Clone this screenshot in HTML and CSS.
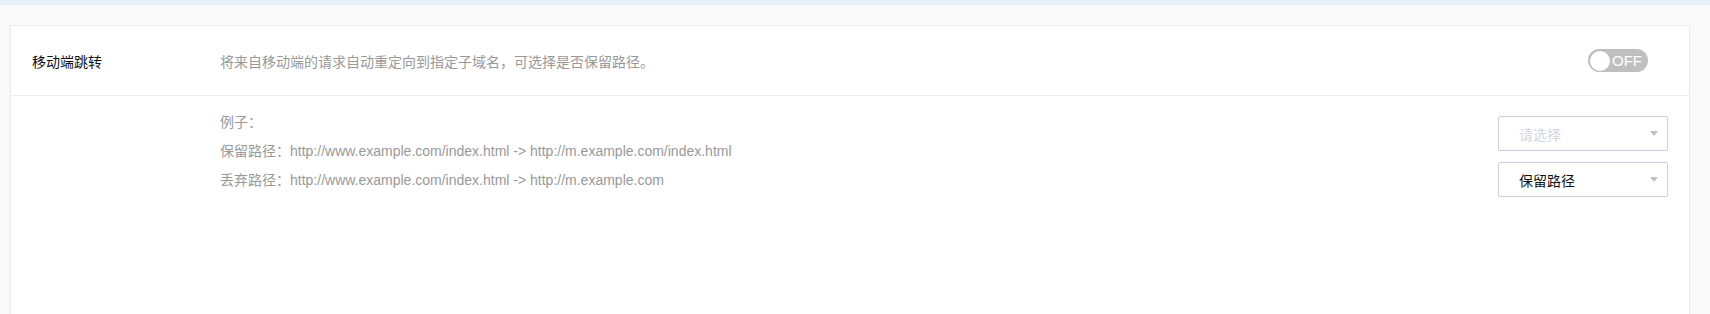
FILE: index.html
```html
<!DOCTYPE html>
<html lang="zh-CN">

<head>
    <meta charset="UTF-8" />
    <meta name="viewport" content="width=device-width, initial-scale=1.0" />
    <title>移动端跳转</title>

    <link rel="stylesheet" href="styles.css">
</head>

<body>
    <div class="topbar"></div>

    <div class="page">
        <div class="card">
            <div class="row head">
                <div class="label">移动端跳转</div>
                <div class="desc">将来自移动端的请求自动重定向到指定子域名，可选择是否保留路径。</div>
                <div class="ctrl">
                    <span class="switch"><span class="knob"></span>OFF</span>
                </div>
            </div>

            <div class="row body">
                <div class="label"></div>
                <div class="examples">
                    <p>例子：</p>
                    <p>保留路径：http://www.example.com/index.html -&gt; http://m.example.com/index.html</p>
                    <p>丢弃路径：http://www.example.com/index.html -&gt; http://m.example.com</p>
                </div>
                <div class="ctrl selects">
                    <div class="select placeholder">
                        <span>请选择</span>
                        <i class="arrow"></i>
                    </div>
                    <div class="select">
                        <span>保留路径</span>
                        <i class="arrow"></i>
                    </div>
                </div>
            </div>
        </div>
    </div>
</body>

</html>
```

FILE: styles.css
```css
body {
    margin: 0;
    background-color: #f9f9f9;
    font-family: "Liberation Sans", Arial, "Noto Sans CJK SC", sans-serif;
    color: #333;
}

.topbar {
    height: 5px;
    background-color: #e6f1fc;
}

.page {
    padding: 20px 20px 0 10px;
}

.card {
    background-color: #fff;
    border: 1px solid #ebebeb;
    min-height: 400px;
}

.row {
    display: grid;
    grid-template-columns: 209px 1fr 191px;
}

.head {
    height: 69px;
    align-items: center;
    border-bottom: 1px solid #eeeeee;
}

.label {
    padding-left: 21px;
    font-size: 14px;
    color: #111;
}

.desc {
    font-size: 14px;
    color: #999;
}

.head .ctrl {
    display: flex;
    justify-content: flex-end;
    padding-right: 41px;
}

.switch {
    display: flex;
    align-items: center;
    width: 60px;
    height: 23px;
    box-sizing: border-box;
    padding: 0 2px;
    border-radius: 12px;
    background-color: #bfbfbf;
    color: #fff;
    font-size: 15px;
}

.knob {
    width: 20px;
    height: 20px;
    border-radius: 50%;
    background-color: #fff;
    margin-right: 2px;
}

.body {
    align-items: start;
}

.examples {
    padding-top: 12px;
    font-size: 14px;
    color: #999;
}

.examples p {
    margin: 0;
    line-height: 29px;
}

.selects {
    padding: 20px 21px 0 0;
    display: flex;
    flex-direction: column;
    gap: 11px;
}

.select {
    display: flex;
    align-items: center;
    justify-content: space-between;
    width: 170px;
    height: 35px;
    box-sizing: border-box;
    padding: 0 9px 0 20px;
    border: 1px solid #c8d0dd;
    border-radius: 2px;
    font-size: 14px;
    color: #111;
}

.select.placeholder {
    color: #d3d7de;
}

.arrow {
    width: 0;
    height: 0;
    border-left: 4px solid transparent;
    border-right: 4px solid transparent;
    border-top: 5px solid #bcc2cc;
}
```
